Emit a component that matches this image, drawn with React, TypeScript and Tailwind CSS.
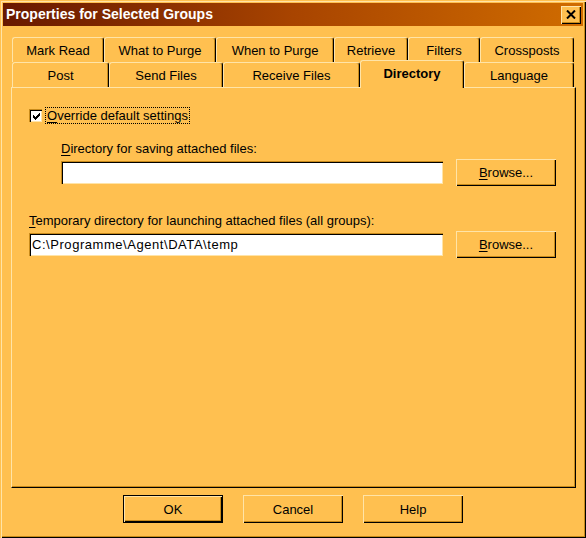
import React from 'react';

// bevels used all over the dialog
const raised = 'shadow-[inset_1px_1px_0_#ffe4a8,inset_-1px_-1px_0_#000,inset_-2px_-2px_0_#c88a1a]';
const sunken = 'shadow-[inset_1px_1px_0_#c88a1a,inset_2px_2px_0_#000,inset_-1px_-1px_0_#ffe4a8]';

const backRow = [
    { label: 'Mark Read', w: 'w-[92px]' },
    { label: 'What to Purge', w: 'w-[112px]' },
    { label: 'When to Purge', w: 'w-[118px]' },
    { label: 'Retrieve', w: 'w-[74px]' },
    { label: 'Filters', w: 'w-[72px]' },
    { label: 'Crossposts', w: 'w-[94px]' },
];

const frontRow = [
    { label: 'Post', w: 'w-[97px]' },
    { label: 'Send Files', w: 'w-[114px]' },
    { label: 'Receive Files', w: 'w-[137px]' },
    { label: 'Directory', w: 'w-[104px]', active: true },
    { label: 'Language', w: 'w-[110px]' },
];

const Tab: React.FC<{ label: string; w: string; active?: boolean }> = ({ label, w, active }) => (
    <div
        className={`${w} ${active ? 'h-[28px] mb-[-1px] relative z-10 font-bold pb-[3px]' : 'h-[25px] pt-[1px]'} flex items-center justify-center bg-[#ffc050] border-t border-l border-r border-t-[#ffe4a8] border-l-[#ffe4a8] border-r-black rounded-t-[3px] shadow-[inset_-1px_0_0_#c88a1a]`}
    >
        {label}
    </div>
);

const Button: React.FC<{ children: React.ReactNode; isDefault?: boolean; className?: string }> = ({ children, isDefault, className = '' }) => (
    <div className={`${className} ${isDefault ? 'border border-black' : ''} bg-[#ffc050]`}>
        <div className={`w-full h-full flex items-center justify-center ${raised}`}>{children}</div>
    </div>
);

const CheckIcon = () => (
    <svg width="7" height="7" viewBox="0 0 7 7" shapeRendering="crispEdges">
        <path d="M0 2h1v3h-1zM1 3h1v3h-1zM2 4h1v3h-1zM3 3h1v3h-1zM4 2h1v3h-1zM5 1h1v3h-1zM6 0h1v3h-1z" fill="#000" />
    </svg>
);

const App: React.FC = () => {
    return (
        <div
            className="w-[586px] h-[538px] bg-[#ffc050] p-[3px] flex flex-col text-[13px] leading-[15px] text-black shadow-[inset_1px_1px_0_#ffc050,inset_2px_2px_0_#ffe4a8,inset_-1px_-1px_0_#000,inset_-2px_-2px_0_#c88a1a]"
            style={{ fontFamily: '"Liberation Sans", Arial, sans-serif' }}
        >
            {/* title bar */}
            <div className="h-[23px] flex items-center justify-between pl-[3px] pr-[2px] bg-gradient-to-r from-[#681800] via-[#a84400] to-[#d06c00]">
                <span className="text-white font-bold text-[14px]">Properties for Selected Groups</span>
                <div className={`w-[20px] h-[18px] bg-[#ffc050] flex items-center justify-center ${raised}`}>
                    <svg width="10" height="9" viewBox="0 0 10 9">
                        <path d="M1 0.5L9 8.5M9 0.5L1 8.5" stroke="#000" strokeWidth="2" />
                    </svg>
                </div>
            </div>

            <div className="flex flex-col pl-[8px] pr-[7px] pt-[11px]">
                {/* tabs */}
                <div className="flex pl-[1px]">
                    {backRow.map(t => <Tab key={t.label} {...t} />)}
                </div>
                <div className="flex items-end pl-[1px] h-[25px]">
                    {frontRow.map(t => <Tab key={t.label} {...t} />)}
                </div>

                {/* page */}
                <div className="h-[401px] border-t border-l border-r border-b border-t-[#ffe4a8] border-l-[#ffe4a8] border-r-black border-b-black shadow-[inset_-1px_-1px_0_#c88a1a] flex flex-col pl-[17px] pt-[19px]">
                    <div className="flex items-center gap-[3px]">
                        <div className={`w-[13px] h-[13px] bg-white flex items-center justify-center pl-[1px] pt-[1px] ${sunken}`}>
                            <CheckIcon />
                        </div>
                        <div className="border border-dotted border-black px-[1px] h-[17px] flex items-center">
                            <span><span className="underline underline-offset-2">O</span>verride default settings</span>
                        </div>
                    </div>

                    <div className="mt-[17px] pl-[32px]">
                        <span className="underline underline-offset-2">D</span>irectory for saving attached files:
                    </div>
                    <div className="mt-[3px] pl-[32px] flex items-center gap-[13px]">
                        <div className={`w-[382px] h-[23px] bg-white ${sunken}`} />
                        <Button className="w-[100px] h-[27px]">
                            <span><span className="underline underline-offset-2">B</span>rowse...</span>
                        </Button>
                    </div>

                    <div className="mt-[27px]">
                        <span className="underline underline-offset-2">T</span>emporary directory for launching attached files (all groups):
                    </div>
                    <div className="mt-[3px] flex items-center gap-[13px]">
                        <div className={`w-[414px] h-[23px] bg-white flex items-center pl-[3px] tracking-[0.55px] ${sunken}`}>
                            C:\Programme\Agent\DATA\temp
                        </div>
                        <Button className="w-[100px] h-[27px]">
                            <span><span className="underline underline-offset-2">B</span>rowse...</span>
                        </Button>
                    </div>
                </div>
            </div>

            {/* dialog buttons */}
            <div className="mt-[7px] flex justify-center gap-[20px]">
                <Button isDefault className="w-[100px] h-[28px]">OK</Button>
                <Button className="w-[100px] h-[28px]">Cancel</Button>
                <Button className="w-[100px] h-[28px]">Help</Button>
            </div>
        </div>
    );
};

export default App;
